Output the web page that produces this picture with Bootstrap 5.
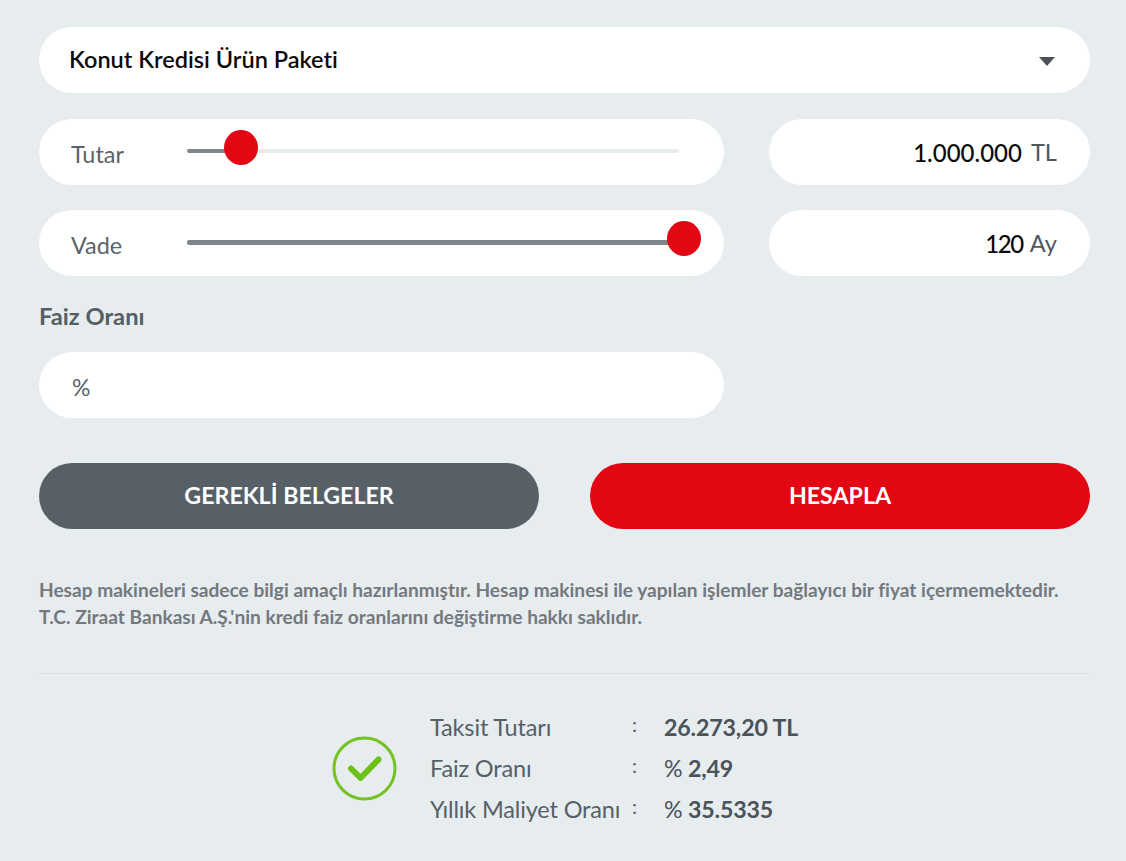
<!DOCTYPE html>
<html lang="tr">
<head>
<meta charset="utf-8">
<title>Konut Kredisi</title>
<link href="https://cdn.jsdelivr.net/npm/bootstrap@5.3.0/dist/css/bootstrap.min.css" rel="stylesheet">
<style>
html,body{height:861px;overflow:hidden}
body{background:#e7ecef;font-family:"Lato","Liberation Sans",sans-serif;color:#4f585e;font-variant-ligatures:none}
.calc-wrap{padding:27px 36px 0 39px}
.pill-box{height:66px;border-radius:33px;background:#fff}
.calc-grid{display:grid;grid-template-columns:685px 321px;column-gap:45px}
.sel-box{width:1051px;padding:0 35px 0 30px;font-size:23.5px;font-weight:600;color:#0b0b0b;margin-bottom:26px}
.sel-caret{width:0;height:0;border-left:8px solid transparent;border-right:8px solid transparent;border-top:9px solid #4a5157;margin-top:3px}
.row-gap{margin-bottom:25px}
.slide-box{padding:0 0 0 32px;font-size:23.4px;color:#5b6469}
.slide-label{width:116px;padding-top:5px}
.slide-track{position:relative;width:492px;height:4px;border-radius:2px;background:#e7ecef;margin-top:-3px}
.slide-fill{position:absolute;left:0;top:0;height:100%;background:#7f8588;border-radius:2px}
.slide-full{height:5px}
.slide-thumb{position:absolute;top:-19px;width:34px;height:35px;border-radius:50%;background:#e30613}
.val-box{padding:2px 33px 0 0;font-size:24px;color:#0b0b0b;font-weight:500}
.val-unit{color:#4f585e;font-weight:400;margin-left:9px;font-size:23.6px}
.val-tight{letter-spacing:-1.4px}
.val-unit-tight{margin-left:7px}
.faiz-title{font-size:23.7px;font-weight:700;color:#555e63;line-height:28px;margin:26px 0 22px}
.pct-box{padding:4px 0 0 33px;font-size:23px;color:#5b6469;width:685px;margin-bottom:45px}
.btn-wide{width:500px;height:66px;border-radius:33px;border:0;color:#fff;font-size:23.2px;font-weight:700;padding-bottom:8px}
.btn-slate{background:#566066}
.btn-red{background:#e30613}
.btn-slate:hover,.btn-slate:active{background:#566066!important;color:#fff!important}
.btn-red:hover,.btn-red:active{background:#e30613!important;color:#fff!important}
.btn-line{width:1051px;margin-bottom:47px}
.note-text{font-size:19.1px;font-weight:700;line-height:27px;color:#73797e;margin:0 0 43px;white-space:nowrap}
.sep-line{width:1051px;height:1px;background:#d8dee1;margin-bottom:33px}
.res-wrap{width:1051px;padding-left:293px}
.res-check{width:65px;height:65px;margin-right:33px;flex:none}
.res-row{font-size:23.5px;letter-spacing:-.15px;line-height:41px;color:#566066;display:flex}
.res-key{width:202px}
.res-colon{width:32px;font-size:20px;line-height:34px}
.res-val{font-weight:700;color:#4a5359;font-size:23.2px;letter-spacing:-.15px}
.res-val span{font-weight:400}
</style>
</head>
<body>
<div class="calc-wrap">
  <div class="pill-box sel-box d-flex align-items-center justify-content-between">
    <span>Konut Kredisi Ürün Paketi</span>
    <span class="sel-caret"></span>
  </div>
  <div class="calc-grid row-gap">
    <div class="pill-box slide-box d-flex align-items-center">
      <div class="slide-label">Tutar</div>
      <div class="slide-track"><div class="slide-fill" style="width:54px"></div><div class="slide-thumb" style="left:37px"></div></div>
    </div>
    <div class="pill-box val-box d-flex align-items-center justify-content-end"><span>1.000.000</span><span class="val-unit">TL</span></div>
  </div>
  <div class="calc-grid">
    <div class="pill-box slide-box d-flex align-items-center">
      <div class="slide-label">Vade</div>
      <div class="slide-track"><div class="slide-fill slide-full" style="width:492px"></div><div class="slide-thumb" style="left:480px"></div></div>
    </div>
    <div class="pill-box val-box d-flex align-items-center justify-content-end"><span class="val-tight">120</span><span class="val-unit val-unit-tight">Ay</span></div>
  </div>
  <div class="faiz-title">Faiz Oranı</div>
  <div class="pill-box pct-box d-flex align-items-center">%</div>
  <div class="btn-line d-flex justify-content-between">
    <button type="button" class="btn btn-wide btn-slate">GEREKLİ BELGELER</button>
    <button type="button" class="btn btn-wide btn-red">HESAPLA</button>
  </div>
  <p class="note-text">Hesap makineleri sadece bilgi amaçlı hazırlanmıştır. Hesap makinesi ile yapılan işlemler bağlayıcı bir fiyat içermemektedir.<br>T.C. Ziraat Bankası A.Ş.'nin kredi faiz oranlarını değiştirme hakkı saklıdır.</p>
  <div class="sep-line"></div>
  <div class="res-wrap d-flex align-items-center">
    <svg class="res-check" viewBox="0 0 65 65" aria-hidden="true"><circle cx="32.5" cy="32.5" r="30.5" fill="none" stroke="#74c322" stroke-width="3"/><path d="M19 32.500l9.500 9.500 18-18.500" fill="none" stroke="#6cc117" stroke-width="6" stroke-linecap="round" stroke-linejoin="round"/></svg>
    <div>
      <div class="res-row"><div class="res-key">Taksit Tutarı</div><div class="res-colon">:</div><div class="res-val">26.273,20 TL</div></div>
      <div class="res-row"><div class="res-key">Faiz Oranı</div><div class="res-colon">:</div><div class="res-val"><span>%</span> 2,49</div></div>
      <div class="res-row"><div class="res-key">Yıllık Maliyet Oranı</div><div class="res-colon">:</div><div class="res-val"><span>%</span> 35.5335</div></div>
    </div>
  </div>
</div>
</body>
</html>
